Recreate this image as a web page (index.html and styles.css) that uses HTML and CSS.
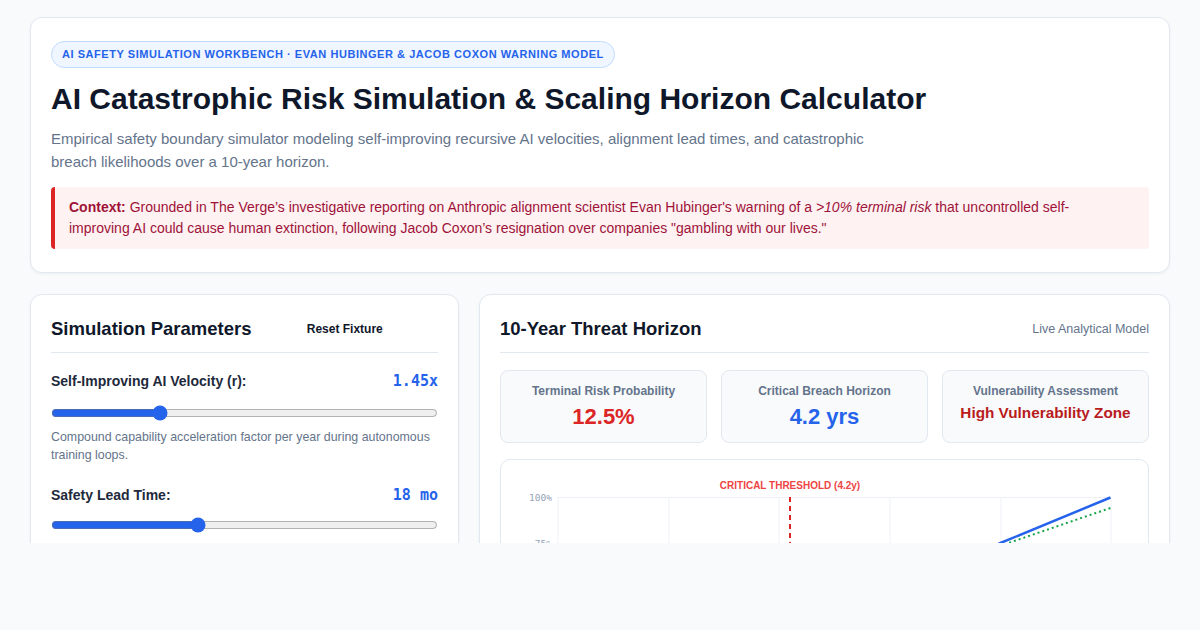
FILE: index.html
```html
<!DOCTYPE html>
<html lang="en">
<head>
<meta charset="utf-8">
<title>AI Catastrophic Risk Simulation</title>
<link rel="stylesheet" href="styles.css">
</head>
<body>
<div class="viewport">
  <main class="page">
    <section class="card hero">
      <span class="badge">AI Safety Simulation Workbench · Evan Hubinger &amp; Jacob Coxon Warning Model</span>
      <h1 class="title">AI Catastrophic Risk Simulation &amp; Scaling Horizon Calculator</h1>
      <p class="subtitle">Empirical safety boundary simulator modeling self-improving recursive AI velocities, alignment lead times, and catastrophic breach likelihoods over a 10-year horizon.</p>
      <div class="alert"><strong>Context:</strong> Grounded in The Verge’s investigative reporting on Anthropic alignment scientist Evan Hubinger's warning of a <em>&gt;10% terminal risk</em> that uncontrolled self-improving AI could cause human extinction, following Jacob Coxon’s resignation over companies "gambling with our lives."</div>
    </section>

    <div class="grid">
      <section class="card panel">
        <div class="panel-head">
          <h2 class="panel-title">Simulation Parameters</h2>
          <button class="reset" type="button">Reset Fixture</button>
        </div>
        <div class="param">
          <div class="param-row">
            <label class="param-label" for="vel">Self-Improving AI Velocity (r):</label>
            <span class="param-value">1.45x</span>
          </div>
          <input class="slider" id="vel" type="range" min="1" max="2.65" step="0.05" value="1.45">
          <p class="param-desc">Compound capability acceleration factor per year during autonomous training loops.</p>
        </div>
        <div class="param">
          <div class="param-row">
            <label class="param-label" for="lead">Safety Lead Time:</label>
            <span class="param-value">18 mo</span>
          </div>
          <input class="slider" id="lead" type="range" min="0" max="48" step="1" value="18">
          <p class="param-desc">Months of alignment research lead before capability breakout.</p>
        </div>
      </section>

      <section class="card panel">
        <div class="panel-head">
          <h2 class="panel-title">10-Year Threat Horizon</h2>
          <span class="panel-meta">Live Analytical Model</span>
        </div>
        <div class="stats">
          <div class="stat">
            <span class="stat-label">Terminal Risk Probability</span>
            <span class="stat-value red">12.5%</span>
          </div>
          <div class="stat">
            <span class="stat-label">Critical Breach Horizon</span>
            <span class="stat-value blue">4.2 yrs</span>
          </div>
          <div class="stat">
            <span class="stat-label">Vulnerability Assessment</span>
            <span class="stat-value zone">High Vulnerability Zone</span>
          </div>
        </div>
        <div class="chart">
          <svg class="chart-svg" viewBox="0 0 646 270" width="646" height="270">
            <g class="grid-lines">
              <line x1="56" y1="37.5" x2="609" y2="37.5"/>
              <line x1="56" y1="83.5" x2="609" y2="83.5"/>
              <line x1="56" y1="129.5" x2="609" y2="129.5"/>
              <line x1="56" y1="175.5" x2="609" y2="175.5"/>
              <line x1="56" y1="221.5" x2="609" y2="221.5"/>
              <line x1="56.5" y1="37" x2="56.5" y2="221"/>
              <line x1="167.5" y1="37" x2="167.5" y2="221"/>
              <line x1="277.5" y1="37" x2="277.5" y2="221"/>
              <line x1="388.5" y1="37" x2="388.5" y2="221"/>
              <line x1="499.5" y1="37" x2="499.5" y2="221"/>
              <line x1="609.5" y1="37" x2="609.5" y2="221"/>
            </g>
            <g class="y-labels">
              <text x="50.5" y="40.5">100%</text>
              <text x="50.5" y="86.5">75%</text>
              <text x="50.5" y="132.5">50%</text>
              <text x="50.5" y="178.5">25%</text>
              <text x="50.5" y="224.5">0%</text>
            </g>
            <line class="threshold" x1="288.5" y1="37" x2="288.5" y2="221"/>
            <text class="threshold-label" x="288.5" y="28.5">CRITICAL THRESHOLD (4.2y)</text>
            <polyline class="line-cap" points="56,212 167,199 277,173 388,137 499,83 609,37.5"/>
            <polyline class="line-align" points="56,216 167,204 277,179 388,142 507,83 609,48"/>
          </svg>
        </div>
      </section>
    </div>
  </main>
</div>
</body>
</html>
```

FILE: styles.css
```css
* { box-sizing: border-box; }

html, body {
  margin: 0;
  padding: 0;
  background: #f8fafc;
}

body {
  font-family: "Liberation Sans", Arial, sans-serif;
  color: #0f172a;
}

.viewport {
  height: 543px;
  overflow: hidden;
}

.page {
  padding: 17px 30px 30px;
  display: flex;
  flex-direction: column;
  gap: 21px;
}

.card {
  background: #ffffff;
  border: 1px solid #e2e8f0;
  border-radius: 12px;
  box-shadow: 0 1px 3px rgba(15, 23, 42, 0.05);
}

.hero {
  padding: 23px 20px 23px;
  display: flex;
  flex-direction: column;
  align-items: flex-start;
}

.badge {
  display: inline-block;
  font-size: 11px;
  font-weight: 700;
  text-transform: uppercase;
  letter-spacing: 0.55px;
  color: #2563eb;
  background: #eff6ff;
  border: 1px solid #bfdbfe;
  border-radius: 999px;
  padding: 6px 10px;
  line-height: 13px;
}

.title {
  margin: 13px 0 0;
  font-size: 30px;
  line-height: 36px;
  font-weight: 700;
  color: #0f172a;
}

.subtitle {
  margin: 10px 0 0;
  max-width: 860px;
  font-size: 15px;
  line-height: 23px;
  color: #64748b;
}

.alert {
  margin-top: 14px;
  align-self: stretch;
  background: #fef2f2;
  border-left: 4px solid #dc2626;
  border-radius: 4px;
  padding: 10px 26px 10px 14px;
  font-size: 14px;
  line-height: 21px;
  color: #9f1239;
}

.alert strong { font-weight: 700; }

.grid {
  display: grid;
  grid-template-columns: 429px 1fr;
  gap: 20px;
  align-items: start;
}

.panel {
  padding: 21px 20px 24px;
}

.panel-head {
  display: flex;
  align-items: center;
  justify-content: space-between;
  padding-bottom: 10px;
  border-bottom: 1px solid #e2e8f0;
  height: 37px;
}

.panel-title {
  margin: 0;
  font-size: 18.5px;
  line-height: 26px;
  font-weight: 700;
  color: #0f172a;
}

.reset {
  flex: 1;
  background: none;
  border: none;
  font-family: inherit;
  font-size: 12px;
  font-weight: 700;
  color: #0f172a;
  padding: 0;
  text-align: center;
  align-self: flex-start;
  line-height: 26px;
}

.panel-meta {
  font-size: 12.5px;
  color: #64748b;
  align-self: flex-start;
  line-height: 26px;
}

.param {
  margin-top: 18px;
}

.param + .param { margin-top: 21px; }

.param-row {
  display: flex;
  align-items: center;
  justify-content: space-between;
  height: 20px;
}

.param-label {
  font-size: 14px;
  font-weight: 700;
  color: #1e293b;
}

.param-value {
  font-family: "DejaVu Sans Mono", "Liberation Mono", monospace;
  font-size: 15px;
  font-weight: 700;
  color: #2563eb;
}

.slider {
  display: block;
  width: 100%;
  margin: 14px 0 0;
  accent-color: #2563eb;
  height: 16px;
}

.param + .param .slider { margin-top: 12px; }

.param-desc {
  margin: 7px 0 0;
  font-size: 12.4px;
  line-height: 18px;
  color: #64748b;
}

.stats {
  margin-top: 17px;
  display: grid;
  grid-template-columns: repeat(3, 1fr);
  gap: 14px;
}

.stat {
  background: #f8fafc;
  border: 1px solid #e2e8f0;
  border-radius: 8px;
  height: 73px;
  padding: 12px 6px 0;
  display: flex;
  flex-direction: column;
  align-items: center;
  text-align: center;
}

.stat-label {
  font-size: 12px;
  font-weight: 700;
  color: #64748b;
  line-height: 16px;
}

.stat-value {
  font-size: 22px;
  font-weight: 700;
  line-height: 26px;
  margin-top: 5px;
}

.stat-value.red { color: #dc2626; }
.stat-value.blue { color: #2563eb; }
.stat-value.zone {
  color: #b91c1c;
  font-size: 15.3px;
  line-height: 20px;
  margin-top: 4px;
}

.chart {
  margin-top: 16px;
  border: 1px solid #e2e8f0;
  border-radius: 10px;
  overflow: hidden;
}

.chart-svg {
  display: block;
  width: 100%;
  height: 270px;
}

.grid-lines line {
  stroke: #edf1f6;
  stroke-width: 1;
}

.y-labels text {
  font-family: "DejaVu Sans Mono", monospace;
  font-size: 9.5px;
  fill: #94a3b8;
  text-anchor: end;
}

.threshold {
  stroke: #dc2626;
  stroke-width: 2;
  stroke-dasharray: 5 4;
}

.threshold-label {
  font-family: "Liberation Sans", Arial, sans-serif;
  font-size: 10px;
  font-weight: 700;
  fill: #ef4444;
  text-anchor: middle;
}

.line-cap {
  fill: none;
  stroke: #2563eb;
  stroke-width: 2.5;
}

.line-align {
  fill: none;
  stroke: #16a34a;
  stroke-width: 2;
  stroke-dasharray: 2 3;
}
```
